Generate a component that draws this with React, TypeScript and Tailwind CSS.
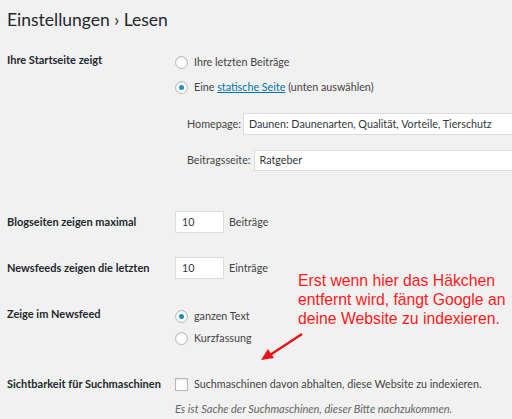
import React from 'react';

const font = { fontFamily: 'Lato, "Open Sans", sans-serif' };

const Radio = ({ checked }: { checked?: boolean }) => (
  <span className="w-[13px] h-[13px] rounded-full border border-[#b4b9be] bg-white shadow-[inset_0_1px_2px_rgba(0,0,0,0.1)] flex items-center justify-center shrink-0">
    {checked && <span className="w-[5px] h-[5px] rounded-full bg-[#1e8cbe]" />}
  </span>
);

export default function App() {
  return (
    <div
      className="w-[512px] h-[419px] overflow-hidden bg-[#f1f1f1] text-[#444] relative"
      style={font}
    >
      <div className="pl-[7px] pt-[6px] flex flex-col">
        {/* Title */}
        <h1 className="text-[17.5px] leading-[28px] text-[#23282d]">Einstellungen › Lesen</h1>

        {/* Startseite */}
        <div className="flex mt-[18px]">
          <div className="w-[168px] shrink-0 text-[11px] leading-[16px] font-bold text-[#23282d]">
            Ihre Startseite zeigt
          </div>
          <div className="flex flex-col text-[10.75px]">
            <label className="flex items-center gap-[6px] h-[20px]">
              <Radio />
              <span>Ihre letzten Beiträge</span>
            </label>
            <label className="flex items-center gap-[6px] h-[20px] mt-[5px]">
              <Radio checked />
              <span>
                Eine <span className="text-[#0073aa] underline">statische Seite</span> (unten auswählen)
              </span>
            </label>
            <div className="flex items-center mt-[16px] ml-[12px]">
              <span className="mr-[2px]">Homepage:</span>
              <div className="w-[300px] h-[22px] bg-white border border-[#ddd] flex items-center pl-[5px] text-[#32373c] whitespace-nowrap">
                Daunen: Daunenarten, Qualität, Vorteile, Tierschutz
              </div>
            </div>
            <div className="flex items-center mt-[15px] ml-[12px]">
              <span className="mr-[3px]">Beitragsseite:</span>
              <div className="w-[300px] h-[21px] bg-white border border-[#ddd] flex items-center pl-[5px] text-[#32373c]">
                Ratgeber
              </div>
            </div>
          </div>
        </div>

        {/* Blogseiten */}
        <div className="flex items-center mt-[40px]">
          <div className="w-[168px] shrink-0 text-[11px] font-bold text-[#23282d]">Blogseiten zeigen maximal</div>
          <div className="w-[49px] h-[22px] bg-white border border-[#ddd] flex items-center pl-[6px] text-[10.75px] text-[#32373c]">10</div>
          <span className="ml-[5px] text-[10.75px]">Beiträge</span>
        </div>

        {/* Newsfeeds */}
        <div className="flex items-center mt-[24px]">
          <div className="w-[168px] shrink-0 text-[11px] font-bold text-[#23282d]">Newsfeeds zeigen die letzten</div>
          <div className="w-[49px] h-[22px] bg-white border border-[#ddd] flex items-center pl-[6px] text-[10.75px] text-[#32373c]">10</div>
          <span className="ml-[5px] text-[10.75px]">Einträge</span>
        </div>

        {/* Zeige im Newsfeed */}
        <div className="flex mt-[27px]">
          <div className="w-[168px] shrink-0 text-[11px] leading-[16px] font-bold text-[#23282d]">Zeige im Newsfeed</div>
          <div className="flex flex-col text-[10.75px]">
            <label className="flex items-center gap-[6px] h-[20px]">
              <Radio checked />
              <span>ganzen Text</span>
            </label>
            <label className="flex items-center gap-[6px] h-[20px] mt-[2px]">
              <Radio />
              <span>Kurzfassung</span>
            </label>
          </div>
        </div>

        {/* Sichtbarkeit */}
        <div className="flex items-center mt-[28px]">
          <div className="w-[168px] shrink-0 text-[11px] font-bold text-[#23282d] whitespace-nowrap">Sichtbarkeit für Suchmaschinen</div>
          <label className="flex items-center gap-[6px] text-[10.75px] whitespace-nowrap">
            <span className="w-[13px] h-[13px] border border-[#b4b9be] bg-white shadow-[inset_0_1px_2px_rgba(0,0,0,0.1)] shrink-0" />
            <span>Suchmaschinen davon abhalten, diese Website zu indexieren.</span>
          </label>
        </div>
        <p className="ml-[168px] mt-[8px] text-[11px] italic text-[#666] whitespace-nowrap">
          Es ist Sache der Suchmaschinen, dieser Bitte nachzukommen.
        </p>
      </div>

      {/* Annotation */}
      <div
        className="absolute left-[298px] top-[271px] text-[15.75px] leading-[19px] text-[#ff1a1a] whitespace-nowrap"
        style={{ fontFamily: '"Liberation Sans", Arial, sans-serif' }}
      >
        Erst wenn hier das Häkchen
        <br />
        entfernt wird, fängt Google an
        <br />
        deine Website zu indexieren.
      </div>
      <svg className="absolute left-0 top-0" width="512" height="419" viewBox="0 0 512 419">
        <line x1="302" y1="334" x2="270" y2="355" stroke="#e8141a" strokeWidth="2.5" />
        <polygon points="261,360 268,349 274,358" fill="#e8141a" />
      </svg>
    </div>
  );
}
